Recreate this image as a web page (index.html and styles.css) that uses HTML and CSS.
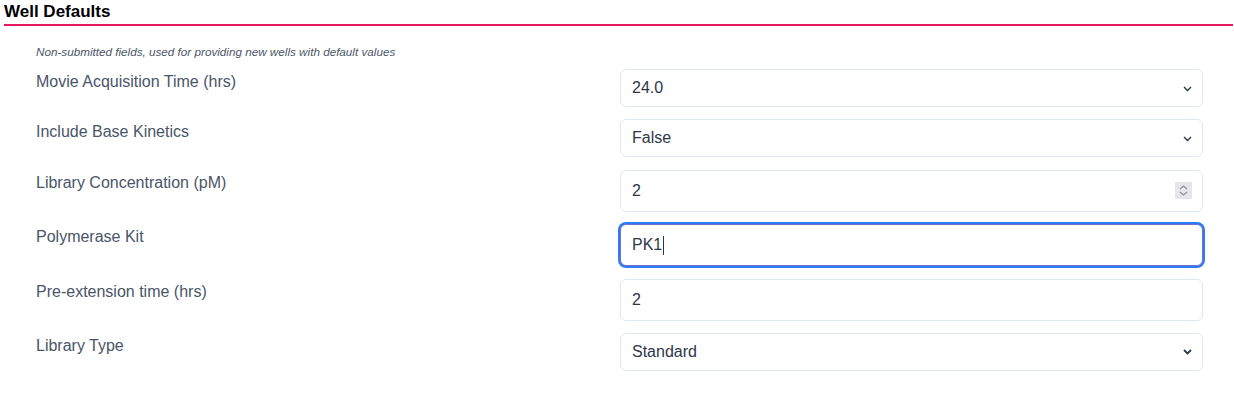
FILE: index.html
```html
<!DOCTYPE html>
<html>
<head>
<meta charset="utf-8">
<link rel="stylesheet" href="styles.css">
</head>
<body>
<section class="panel">
  <h2 class="title">Well Defaults</h2>
  <p class="hint">Non-submitted fields, used for providing new wells with default values</p>
  <div class="form">
    <div class="row select-row">
      <label class="label">Movie Acquisition Time (hrs)</label>
      <div class="control select"><span class="value">24.0</span><svg class="chev" width="9" height="6" viewBox="0 0 9 6"><path d="M1 1l3.5 3.5L8 1" fill="none" stroke="#2d3748" stroke-width="1.4"/></svg></div>
    </div>
    <div class="row select-row">
      <label class="label">Include Base Kinetics</label>
      <div class="control select"><span class="value">False</span><svg class="chev" width="9" height="6" viewBox="0 0 9 6"><path d="M1 1l3.5 3.5L8 1" fill="none" stroke="#2d3748" stroke-width="1.4"/></svg></div>
    </div>
    <div class="row">
      <label class="label">Library Concentration (pM)</label>
      <div class="control text"><span class="value">2</span><span class="spin"><svg width="17" height="17" viewBox="0 0 17 17"><path d="M5 7l3.5-3L12 7M5 10l3.5 3L12 10" fill="none" stroke="#8e8e93" stroke-width="1.2"/></svg></span></div>
    </div>
    <div class="row">
      <label class="label">Polymerase Kit</label>
      <div class="control text focused"><span class="value">PK1</span><span class="caret"></span></div>
    </div>
    <div class="row">
      <label class="label">Pre-extension time (hrs)</label>
      <div class="control text"><span class="value">2</span></div>
    </div>
    <div class="row select-row">
      <label class="label">Library Type</label>
      <div class="control select"><span class="value">Standard</span><svg class="chev" width="9" height="6" viewBox="0 0 9 6"><path d="M1 1l3.5 3.5L8 1" fill="none" stroke="#2d3748" stroke-width="1.8"/></svg></div>
    </div>
  </div>
</section>
</body>
</html>
```
FILE: styles.css
```css
html, body {
  margin: 0;
  padding: 0;
  background: #ffffff;
}
body {
  font-family: "Liberation Sans", Arial, sans-serif;
}
.panel {
  padding: 0 1px 0 4px;
}
.title {
  margin: 0;
  font-size: 17px;
  line-height: 24px;
  font-weight: bold;
  color: #000000;
  border-bottom: 2px solid #e8185e;
}
.hint {
  margin: 19px 0 0 32px;
  font-size: 11.7px;
  line-height: 14px;
  font-style: italic;
  color: #4a5568;
}
.form {
  margin: 10px 30px 0 32px;
  display: flex;
  flex-direction: column;
  gap: 12.4px;
}
.row {
  display: grid;
  grid-template-columns: 1fr 583px;
  align-items: start;
}
.label {
  padding-top: 1px;
  font-size: 16px;
  line-height: 24px;
  color: #4a5568;
}
.control {
  box-sizing: border-box;
  display: flex;
  align-items: center;
  border: 1px solid #e2e8f0;
  border-radius: 6px;
  padding: 0 11px;
  font-size: 16px;
  color: #2d3748;
  background: #ffffff;
}
.select {
  height: 38px;
}
.text {
  height: 42px;
}
.value {
  flex: 1 1 auto;
  line-height: 20px;
}
.focused .value {
  flex: 0 0 auto;
}
.chev {
  flex: 0 0 auto;
  margin-right: -1px;
  margin-top: 1px;
}
.spin {
  flex: 0 0 auto;
  width: 17px;
  height: 17px;
  margin-right: -1px;
  background: #e6e6ea;
  border-radius: 1px;
  display: flex;
}
.focused {
  border-color: #6a74c9;
  box-shadow: 0 0 0 2px #2f7bf5;
}
.caret {
  width: 1px;
  height: 19px;
  margin-left: 1px;
  background: #2d3748;
}
```
